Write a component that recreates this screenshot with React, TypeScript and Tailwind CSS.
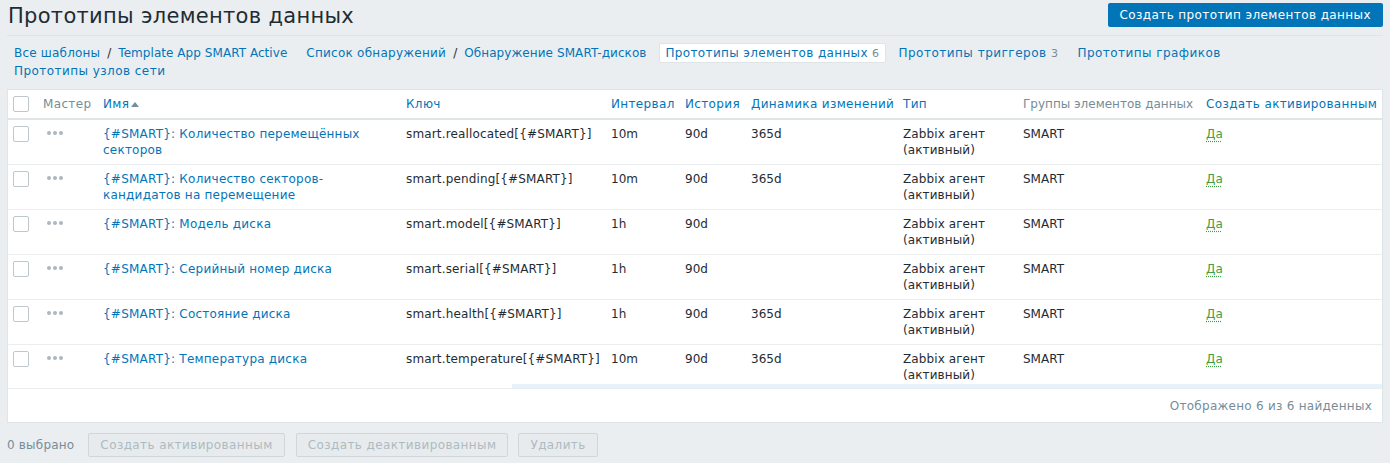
import React from 'react';

const rows = [
  { name: '{#SMART}: Количество перемещённых секторов', key: 'smart.reallocated[{#SMART}]', interval: '10m', history: '90d', trends: '365d' },
  { name: '{#SMART}: Количество секторов-кандидатов на перемещение', key: 'smart.pending[{#SMART}]', interval: '10m', history: '90d', trends: '365d' },
  { name: '{#SMART}: Модель диска', key: 'smart.model[{#SMART}]', interval: '1h', history: '90d', trends: '' },
  { name: '{#SMART}: Серийный номер диска', key: 'smart.serial[{#SMART}]', interval: '1h', history: '90d', trends: '' },
  { name: '{#SMART}: Состояние диска', key: 'smart.health[{#SMART}]', interval: '1h', history: '90d', trends: '365d' },
  { name: '{#SMART}: Температура диска', key: 'smart.temperature[{#SMART}]', interval: '10m', history: '90d', trends: '365d' },
];

function Checkbox() {
  return <span className="block h-[16px] w-[16px] rounded-[2px] border border-[#bfc8cd] bg-white" />;
}

function Dots() {
  return (
    <span className="ml-[4px] mt-[5px] flex gap-[2px]">
      <span className="h-[4px] w-[4px] rounded-full bg-[#adb8be]" />
      <span className="h-[4px] w-[4px] rounded-full bg-[#adb8be]" />
      <span className="h-[4px] w-[4px] rounded-full bg-[#adb8be]" />
    </span>
  );
}

export default function App() {
  const th = 'h-[29px] whitespace-nowrap px-[5px] text-left align-middle font-normal tracking-[0.35px]';
  const td = 'px-[5px] pt-[6px] align-top';
  const li = '-my-[1px] h-[20px] border border-transparent px-[6px] leading-[18px]';
  const btn = 'h-[24px] rounded-[2px] border border-[#cfd7db] bg-[#e8ebed] px-[11px] tracking-[0.4px] text-[#acbbc2]';

  return (
    <div className="min-h-[463px] bg-[#ebeef0] font-['DejaVu_Sans',sans-serif] text-[12px] leading-[16px] text-[#1f2c33]">
      <div className="mx-[7px] flex h-[36px] items-start justify-between border-b border-[#dfe4e7]">
        <h1 className="pl-[1px] text-[21px] leading-[32px] font-normal tracking-[0.3px]">Прототипы элементов данных</h1>
        <button className="mt-[3px] h-[24px] rounded-[2px] bg-[#0275b8] px-[12px] tracking-[0.4px] text-white">Создать прототип элементов данных</button>
      </div>

      <ul className="mt-[8px] flex flex-wrap gap-x-[5px] pl-[7px]">
        <li className={li}>
          <a className="tracking-[0.2px] text-[#0275b8]">Все шаблоны</a>
          <span className="px-[7px]">/</span>
          <a className="tracking-[0.05px] text-[#0275b8]">Template App SMART Active</a>
        </li>
        <li className={li}>
          <a className="tracking-[0.25px] text-[#0275b8]">Список обнаружений</a>
          <span className="px-[7px]">/</span>
          <a className="tracking-[0.08px] text-[#0275b8]">Обнаружение SMART-дисков</a>
        </li>
        <li className="-my-[1px] h-[20px] rounded-[2px] border border-[#dfe4e7] bg-white px-[6px] leading-[18px] tracking-[0.35px] text-[#0275b8]">
          Прототипы элементов данных <span className="text-[11px] text-[#768d99]">6</span>
        </li>
        <li className={`${li} tracking-[0.5px] text-[#0275b8]`}>
          Прототипы триггеров <span className="text-[11px] text-[#768d99]">3</span>
        </li>
        <li className={`${li} tracking-[0.45px] text-[#0275b8]`}>Прототипы графиков</li>
        <li className={`${li} tracking-[0.45px] text-[#0275b8]`}>Прототипы узлов сети</li>
      </ul>

      <div className="mx-[7px] mt-[9px] border border-[#dfe4e7] bg-white">
        <table className="w-full table-fixed border-collapse">
          <colgroup>
            <col className="w-[30px]" />
            <col className="w-[60px]" />
            <col className="w-[303px]" />
            <col className="w-[205px]" />
            <col className="w-[74px]" />
            <col className="w-[66px]" />
            <col className="w-[152px]" />
            <col className="w-[120px]" />
            <col className="w-[183px]" />
            <col className="w-[181px]" />
          </colgroup>
          <thead>
            <tr className="border-b-2 border-[#dfe4e7]">
              <th className={th}><Checkbox /></th>
              <th className={`${th} text-[#768d99]`}>Мастер</th>
              <th className={`${th} text-[#0275b8]`}>
                Имя<span className="ml-[2px] inline-block h-0 w-0 border-x-[4px] border-b-[5px] border-x-transparent border-b-[#768d99] align-[1px]" />
              </th>
              <th className={`${th} text-[#0275b8]`}>Ключ</th>
              <th className={`${th} text-[#0275b8]`}>Интервал</th>
              <th className={`${th} text-[#0275b8]`}>История</th>
              <th className={`${th} text-[#0275b8]`}>Динамика изменений</th>
              <th className={`${th} text-[#0275b8]`}>Тип</th>
              <th className={`${th} !tracking-normal text-[#768d99]`}>Группы элементов данных</th>
              <th className={`${th} text-[#0275b8]`}>Создать активированным</th>
            </tr>
          </thead>
          <tbody>
            {rows.map((r, i) => {
              const last = i === rows.length - 1;
              return (
                <tr key={r.key} className={last ? 'h-[40px]' : 'h-[45px] border-b border-[#ebeef0]'}>
                  <td className={`${td} pt-[5px]`}><Checkbox /></td>
                  <td className={td}><Dots /></td>
                  <td className={`${td} tracking-[0.22px] text-[#0275b8]`}>{r.name}</td>
                  <td className={`${td} whitespace-nowrap tracking-[0.15px]`}>{r.key}</td>
                  <td className={td}>{r.interval}</td>
                  <td className={td}>{r.history}</td>
                  <td className={td}>{r.trends}</td>
                  <td className={`${td} tracking-[0.1px]`}>Zabbix агент (активный)</td>
                  <td className={td}>SMART</td>
                  <td className={td}>
                    <span className="text-[#429e47] underline decoration-dotted underline-offset-[3px]">Да</span>
                  </td>
                </tr>
              );
            })}
          </tbody>
        </table>
        <div className="flex h-[5px] border-b border-[#ebeef0]">
          <div className="w-[504px]" />
          <div className="flex-1 bg-[#e6f2fb]" />
        </div>
        <div className="flex h-[33px] items-center justify-end pr-[10px] tracking-[0.26px] text-[#768d99]">Отображено 6 из 6 найденных</div>
      </div>

      <div className="mt-[10px] flex items-center pl-[7px]">
        <span className="mr-[14px] tracking-[0.2px] text-[#768d99]">0 выбрано</span>
        <button className={btn}>Создать активированным</button>
        <button className={`ml-[11px] ${btn}`}>Создать деактивированным</button>
        <button className={`ml-[10px] ${btn}`}>Удалить</button>
      </div>
    </div>
  );
}
